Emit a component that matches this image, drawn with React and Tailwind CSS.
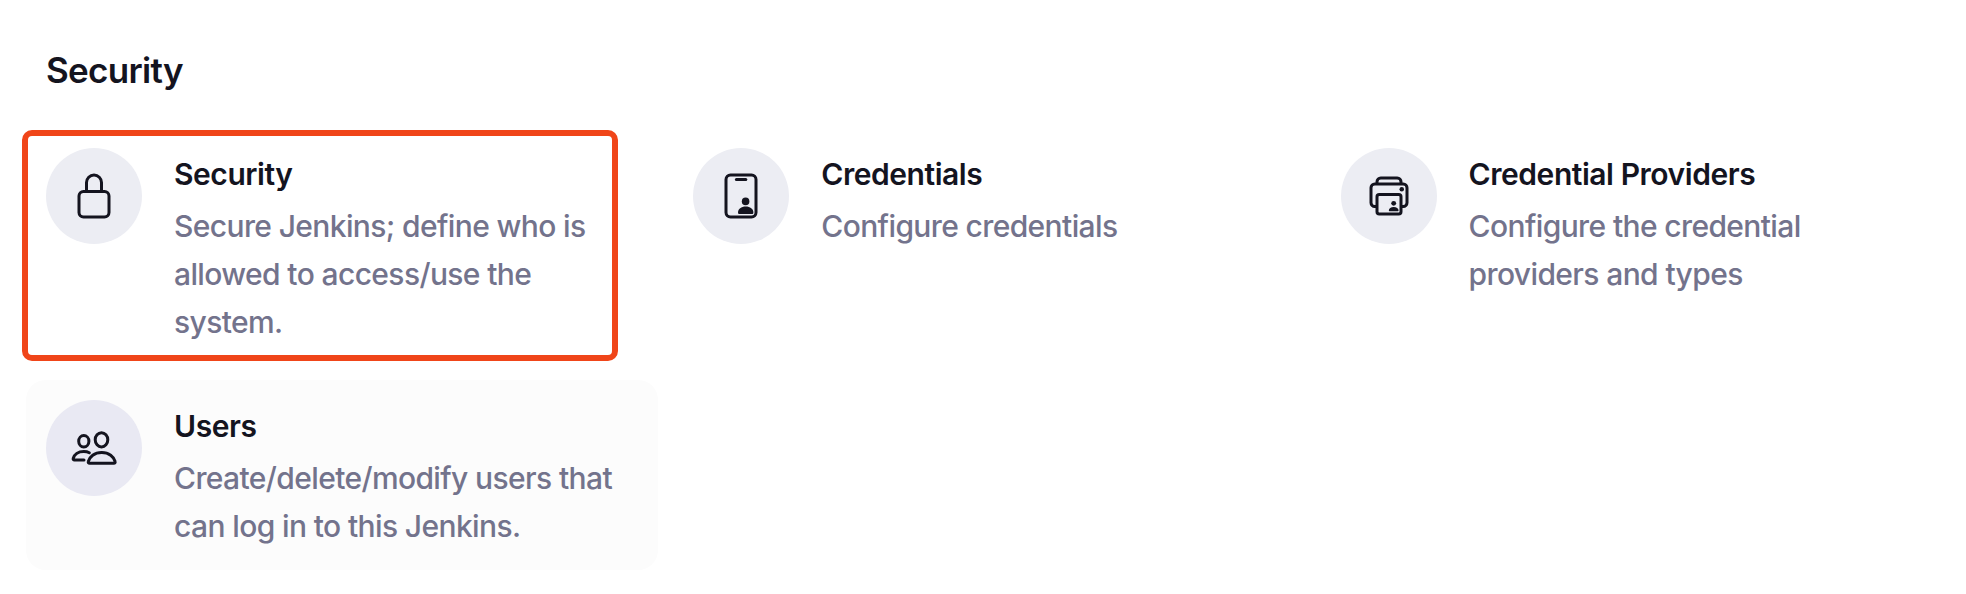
import React from 'react';

const iconClass = 'size-12 fill-none stroke-[#14141f]';

function LockIcon() {
  return (
    <svg viewBox="0 0 512 512" className={iconClass} strokeWidth="32" strokeLinecap="round" strokeLinejoin="round">
      <path d="M336 208v-95a80 80 0 00-160 0v95" />
      <rect x="96" y="208" width="320" height="272" rx="48" ry="48" />
    </svg>
  );
}

function CredentialsIcon() {
  return (
    <svg viewBox="0 0 48 48" className={iconClass} strokeWidth="3">
      <rect x="9" y="3" width="30" height="42" rx="4.5" />
      <path d="M19.4 7.5h9.4" strokeLinecap="round" />
      <circle cx="28.6" cy="29.4" r="3.8" className="fill-[#14141f] stroke-none" />
      <path d="M28.7 34.6c4.4 0 7.7 2.6 7.7 5.8 0 1-.6 1.6-1.5 1.6H22.5c-.9 0-1.5-.6-1.5-1.6 0-3.2 3.3-5.8 7.7-5.8z" className="fill-[#14141f] stroke-none" />
    </svg>
  );
}

function ProvidersIcon() {
  return (
    <svg viewBox="0 0 512 512" className={iconClass} strokeWidth="32" strokeLinejoin="round">
      <path d="M384 368h24a40.12 40.12 0 0040-40V168a40.12 40.12 0 00-40-40H104a40.12 40.12 0 00-40 40v160a40.12 40.12 0 0040 40h24" />
      <rect x="128" y="240" width="256" height="208" rx="24.32" />
      <path d="M384 128v-24a40.12 40.12 0 00-40-40H168a40.12 40.12 0 00-40 40v24" />
      <circle cx="392" cy="184" r="24" className="fill-[#14141f] stroke-none" />
      <circle cx="306" cy="334" r="26" className="fill-[#14141f] stroke-none" />
      <path d="M306 374c29 0 52 17 52 36 0 5-3 8-8 8h-88c-5 0-8-3-8-8 0-19 23-36 52-36z" className="fill-[#14141f] stroke-none" />
    </svg>
  );
}

function UsersIcon() {
  return (
    <svg viewBox="0 0 48 48" className={iconClass} strokeWidth="3" strokeLinecap="round" strokeLinejoin="round">
      <ellipse cx="13.8" cy="17.3" rx="5.1" ry="5.7" />
      <ellipse cx="31.5" cy="15.8" rx="6.3" ry="7.1" />
      <path d="M19.3 28.7c-1.500-.8-3.500-1.200-5.500-1.200-5.600 0-9.600 3.200-10.600 7-.2.900.3 1.500 1.200 1.500H14" />
      <path d="M31.7 28.500c-7.400 0-12.100 4.200-13.400 9-.3 1 .3 1.800 1.300 1.800h24.200c1 0 1.600-.8 1.300-1.800-1.300-4.800-6-9-13.400-9z" />
    </svg>
  );
}

const items = [
  { title: 'Security', Icon: LockIcon, lines: ['Secure Jenkins; define who is', 'allowed to access/use the', 'system.'], marked: true },
  { title: 'Credentials', Icon: CredentialsIcon, lines: ['Configure credentials'] },
  { title: 'Credential Providers', Icon: ProvidersIcon, lines: ['Configure the credential', 'providers and types'] },
  { title: 'Users', Icon: UsersIcon, lines: ['Create/delete/modify users that', 'can log in to this Jenkins.'], hovered: true },
];

function Item({ title, Icon, lines, marked, hovered }) {
  return (
    <a className={`relative flex gap-8 rounded-[20px] p-5 ${hovered ? 'bg-[#fcfcfc]' : ''}`}>
      {marked && <span className="absolute -left-1 top-0.5 h-[231px] w-[596px] rounded-[10px] border-6 border-[#f04519]" />}
      <span className={`flex size-24 shrink-0 items-center justify-center rounded-full ${hovered ? 'bg-[#e9e9f3]' : 'bg-[#ecedf3]'}`}>
        <Icon />
      </span>
      <dl className="pt-1.5 text-[30px]">
        <dt className="mb-2 h-10 whitespace-nowrap leading-10 font-semibold tracking-[-0.45px] text-[#14141f]">{title}</dt>
        <dd className="leading-12 font-medium tracking-[-0.62px] text-[#73738c]">
          {lines.map((line) => (
            <span key={line} className="block whitespace-nowrap">{line}</span>
          ))}
        </dd>
      </dl>
    </a>
  );
}

export default function App() {
  return (
    <main className="h-[594px] w-[1966px] overflow-hidden bg-white pl-[26px] pt-12 font-['Inter',sans-serif]">
      <h2 className="mb-9 pl-5 text-[35px] leading-11 font-semibold tracking-[-0.7px] text-[#14141f]">Security</h2>
      <div className="grid grid-cols-[632px_632px_632px] gap-x-[15.3px] gap-y-3.5">
        {items.map((item) => (
          <Item key={item.title} {...item} />
        ))}
      </div>
    </main>
  );
}
